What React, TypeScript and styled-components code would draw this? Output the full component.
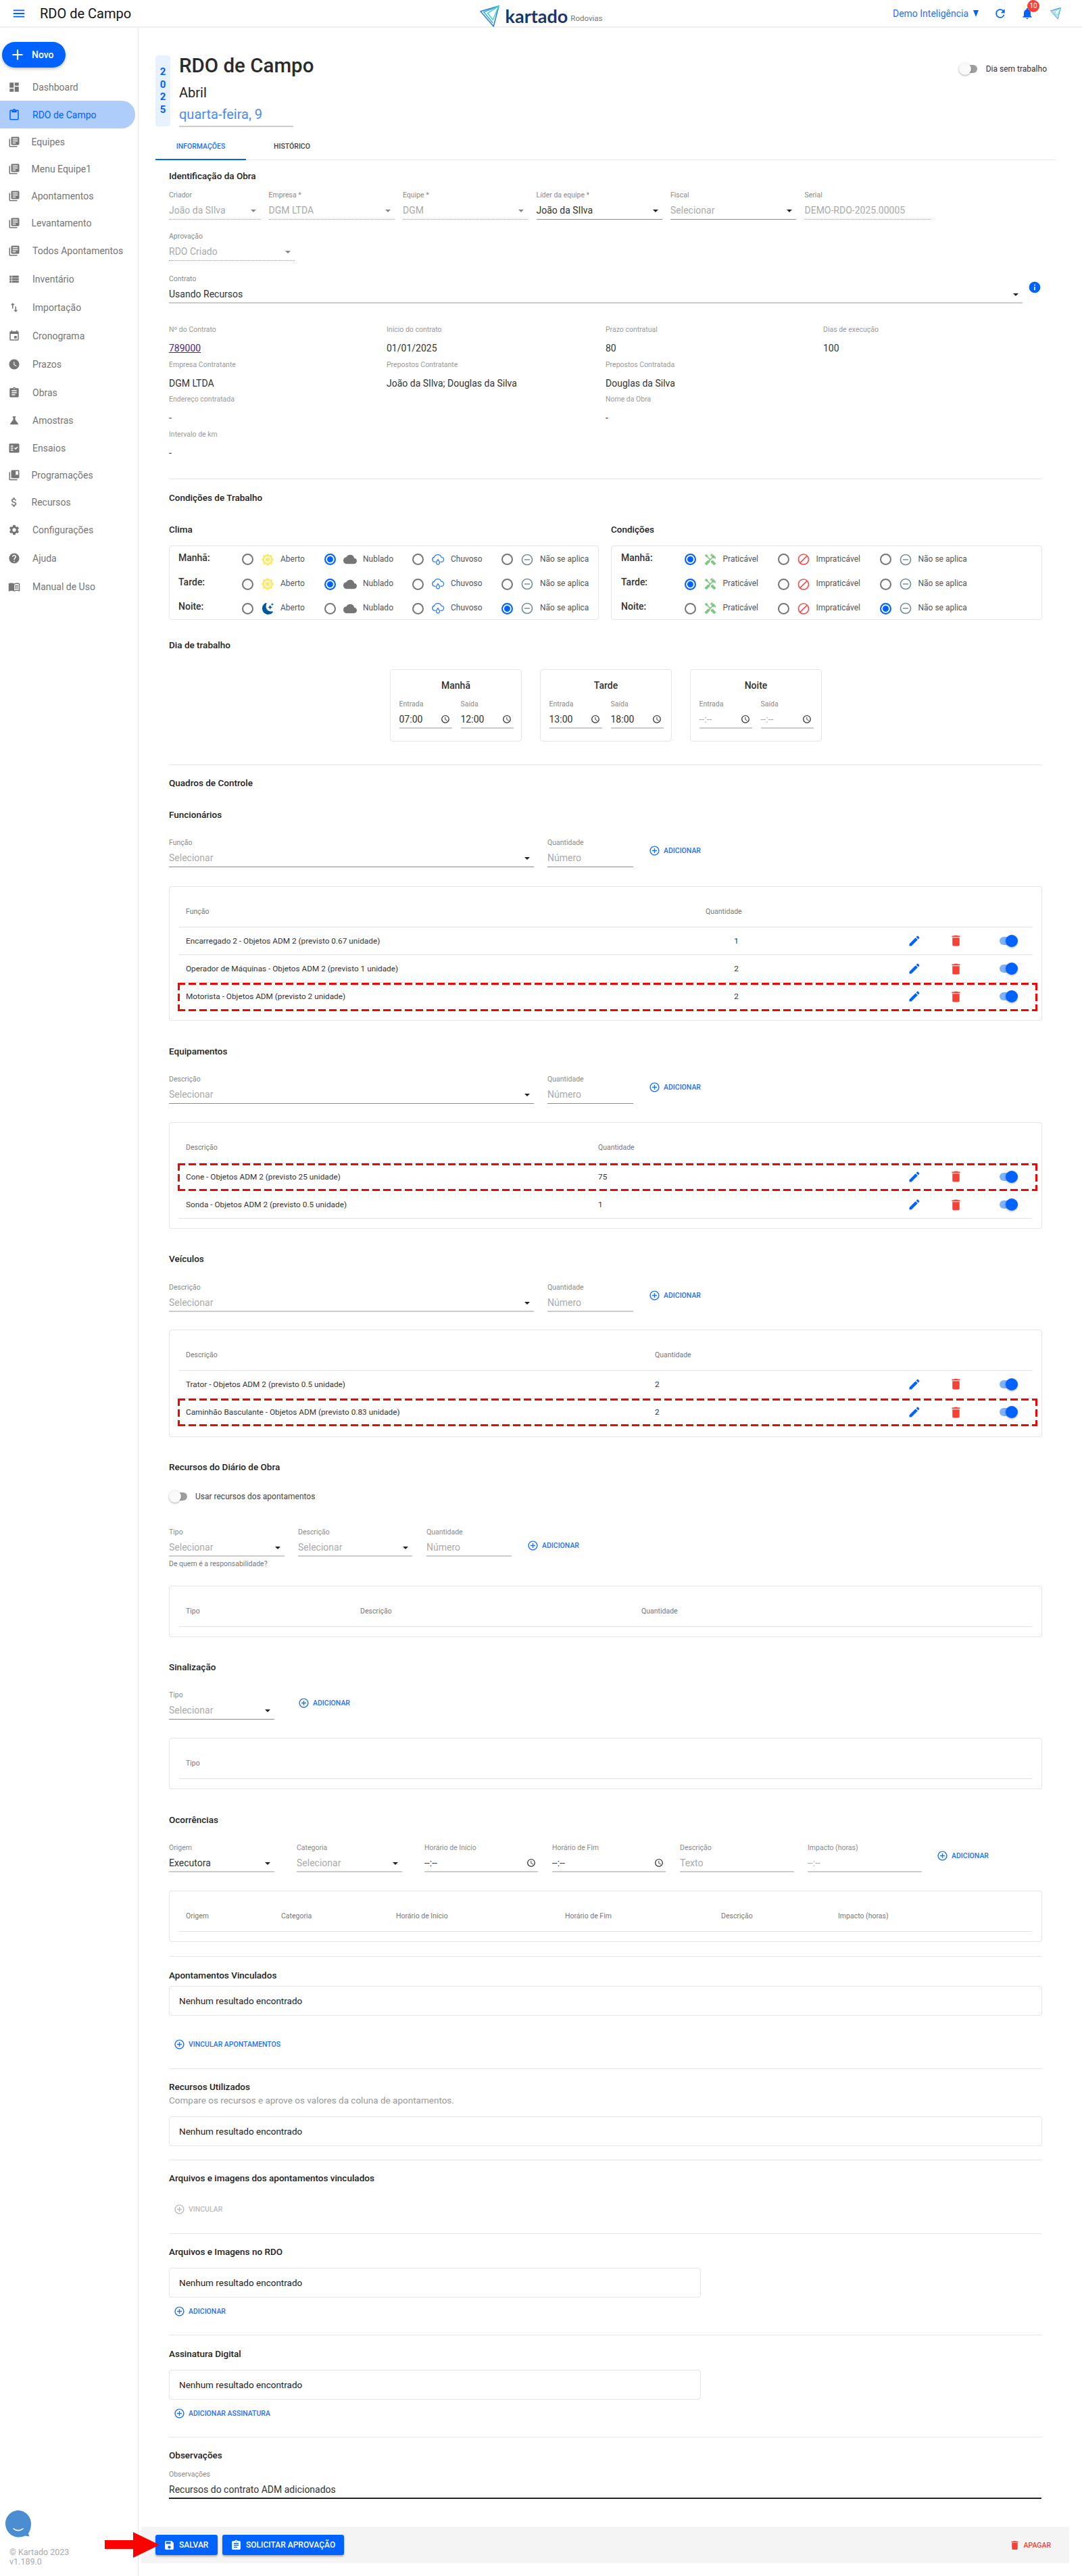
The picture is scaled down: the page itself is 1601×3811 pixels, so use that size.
import React from "react";
import styled, { createGlobalStyle } from "styled-components";
import {
  MdAccessTime, MdAdd, MdAddCircleOutline, MdAssignment, MdAttachMoney, MdBlock, MdBrightness7, MdCloud,
  MdCollectionsBookmark, MdContentPaste, MdDashboard, MdDelete, MdEdit, MdEvent, MdFactCheck, MdHandyman,
  MdHelp, MdImportExport, MdInfo, MdLibraryBooks, MdMenu, MdMenuBook, MdNotifications, MdRefresh,
  MdRemoveCircleOutline, MdSave, MdScience, MdSettings, MdViewList, MdWatchLater,
} from "react-icons/md";
import { BsMoonStarsFill } from "react-icons/bs";

const BLUE = "#0062ff";

const Global = createGlobalStyle`
  html, body { margin: 0; padding: 0; background: #fff; }
  body { font-family: Roboto, "Liberation Sans", sans-serif; color: #333; }
  * { box-sizing: border-box; }
  h1, h2, h3, p { margin: 0; }
`;

const Page = styled.div`
  width: 1601px;
  min-height: 3811px;
  display: flex;
  flex-direction: column;
`;

/* ---------- top bar ---------- */
const TopBar = styled.header`
  height: 41px;
  display: grid;
  grid-template-columns: 1fr auto 1fr;
  align-items: center;
  border-bottom: 2px solid #f0f0f0;
  flex: none;
`;
const TopLeft = styled.div`
  display: flex;
  align-items: center;
  padding-left: 17px;
  gap: 20px;
  color: ${BLUE};
`;
const PageName = styled.span`
  font-size: 20px;
  color: #151515;
`;
const Brand = styled.div`
  display: flex;
  align-items: flex-end;
  height: 40px;
`;
const BrandName = styled.span`
  font-family: Lato, Roboto, sans-serif;
  font-size: 27px;
  font-weight: 700;
  line-height: 33px;
  color: #17376e;
  margin-left: 9px;
`;
const BrandSub = styled.span`
  font-size: 11.5px;
  line-height: 12px;
  color: #777;
  margin-left: 4px;
  margin-bottom: 7px;
`;
const TopRight = styled.div`
  display: flex;
  align-items: center;
  justify-content: flex-end;
  padding-right: 31px;
  color: ${BLUE};
`;
const OrgPicker = styled.span`
  display: flex;
  align-items: center;
  gap: 7px;
  font-size: 14px;
  color: #1f72f2;
  margin-right: 22px;
  &::after {
    content: "";
    border-left: 4.5px solid transparent;
    border-right: 4.5px solid transparent;
    border-top: 10px solid ${BLUE};
  }
`;
const BellWrap = styled.span`
  position: relative;
  display: flex;
  margin: 0 24px 0 20px;
`;
const Badge = styled.span`
  position: absolute;
  left: 10px;
  top: -10px;
  width: 18px;
  height: 18px;
  border-radius: 50%;
  background: #f44336;
  color: #fff;
  font-size: 10px;
  line-height: 18px;
  text-align: center;
`;

const Plane = ({ size }: { size: number }) => (
  <svg width={size} height={size * 1.1} viewBox="0 0 30 33" fill="none" strokeWidth="1.6" strokeLinejoin="round">
    <path d="M29 1 L1 9 L21 32 Z" stroke="#2a7de1" />
    <path d="M29 1 L6 10 L20 27" stroke="#2fb2dc" />
    <path d="M29 1 L12 12 L20 22 Z" stroke="#3fd3cf" />
  </svg>
);

/* ---------- sidebar ---------- */
const Body = styled.div`
  display: flex;
  flex: 1;
`;
const Side = styled.aside`
  width: 205px;
  flex: none;
  border-right: 1px solid #e6e6e6;
  padding-top: 21px;
  display: flex;
  flex-direction: column;
`;
const NewButton = styled.button`
  width: 94px;
  height: 38px;
  margin-left: 3px;
  border: 0;
  padding: 0 0 0 10px;
  border-radius: 19px;
  background: ${BLUE};
  color: #fff;
  font: 500 14px Roboto, sans-serif;
  display: flex;
  align-items: center;
  gap: 8px;
  box-shadow: 0 2px 4px rgba(0, 0, 0, 0.25);
`;
const NavList = styled.nav`
  margin-top: 8px;
`;
const NavItem = styled.a<{ $h: number; $active?: boolean; $tight?: boolean }>`
  display: flex;
  align-items: center;
  height: ${(p) => p.$h}px;
  width: 200px;
  padding-left: 12px;
  font-size: 14px;
  color: ${(p) => (p.$active ? BLUE : "#757575")};
  background: ${(p) => (p.$active ? "#aecdfa" : "transparent")};
  border-radius: 0 20px 20px 0;
  span {
    margin-left: ${(p) => (p.$tight ? 16.5 : 18)}px;
  }
`;
const SideFoot = styled.div`
  margin-top: auto;
  padding: 0 0 14px 14px;
  font-size: 12.5px;
  line-height: 14px;
  color: #aaa;
`;
const Chat = styled.div`
  margin: 0 0 15px -6px;
  width: 38px;
  height: 40px;
`;

/* ---------- main ---------- */
const Main = styled.main`
  width: 1377px;
  display: flex;
  flex-direction: column;
`;
const Inner = styled.div`
  padding: 41px 0 0 25px;
  width: 1357px;
`;
const Head = styled.div`
  display: flex;
  height: 105px;
`;
const YearBox = styled.div`
  width: 22px;
  height: 105px;
  background: #e8f1fe;
  border-radius: 4px;
  color: ${BLUE};
  font-size: 15px;
  font-weight: 700;
  line-height: 18.5px;
  text-align: center;
  padding-top: 15px;
`;
const HeadText = styled.div`
  margin-left: 13px;
`;
const BigTitle = styled.h1`
  font-size: 29.5px;
  font-weight: 500;
  line-height: 30px;
  color: #2b2b2b;
`;
const Month = styled.div`
  font-size: 20px;
  line-height: 24px;
  margin-top: 13px;
  color: #222;
`;
const DayInput = styled.div`
  width: 169px;
  font-size: 20px;
  line-height: 24px;
  margin-top: 8px;
  padding-bottom: 5px;
  color: #4a8bf5;
  border-bottom: 2px solid #ccc;
`;
const DayOff = styled.label`
  margin: 12px 13px 0 auto;
  display: flex;
  align-items: center;
  height: 16px;
  gap: 12px;
  font-size: 12px;
  color: #333;
`;
const Toggle = styled.span<{ $on?: boolean }>`
  position: relative;
  display: inline-block;
  width: 28px;
  height: 18px;
  flex: none;
  &::before {
    content: "";
    position: absolute;
    left: 1px;
    right: 1px;
    top: 3px;
    height: 12px;
    border-radius: 6px;
    background: ${(p) => (p.$on ? "#7fb0fb" : "#9e9e9e")};
  }
  &::after {
    content: "";
    position: absolute;
    top: 0;
    width: 18px;
    height: 18px;
    border-radius: 50%;
    left: ${(p) => (p.$on ? "10px" : "0")};
    background: ${(p) => (p.$on ? BLUE : "#fafafa")};
    box-shadow: 0 1px 3px rgba(0, 0, 0, 0.35);
  }
`;
const Tabs = styled.div`
  margin-top: 10px;
  height: 40px;
  display: flex;
  border-bottom: 1px solid #e8e8e8;
`;
const Tab = styled.div<{ $active?: boolean }>`
  width: ${(p) => (p.$active ? 134 : 136)}px;
  height: 40px;
  display: flex;
  align-items: center;
  justify-content: center;
  font-size: 10.5px;
  font-weight: 500;
  color: ${(p) => (p.$active ? "#1f72f2" : "#444")};
  border-bottom: 2px solid ${(p) => (p.$active ? BLUE : "transparent")};
`;
const Form = styled.div`
  padding-left: 20px;
  width: 1312px;
`;
const Title = styled.h3<{ $mt: number }>`
  margin-top: ${(p) => p.$mt}px;
  font-size: 13.5px;
  font-weight: 500;
  line-height: 16px;
  color: #222;
`;
const Muted = styled.p`
  margin-top: 4px;
  font-size: 13.5px;
  line-height: 16px;
  color: #999;
`;
const Divider = styled.hr<{ $mt: number }>`
  margin: ${(p) => p.$mt}px 0 0;
  border: 0;
  height: 1px;
  background: #e6e6e6;
`;

/* fields */
const FieldRow = styled.div<{ $mt: number }>`
  display: flex;
  margin-top: ${(p) => p.$mt}px;
`;
const FieldBox = styled.div<{ $w: number; $ml?: number }>`
  width: ${(p) => p.$w}px;
  margin-left: ${(p) => p.$ml ?? 0}px;
  flex: none;
`;
const FieldLabel = styled.div`
  font-size: 10.5px;
  line-height: 12px;
  color: #8a8a8a;
`;
type Line = "dotted" | "thin" | "thick" | "dark";
const lineCss: Record<Line, string> = {
  dotted: "1px dotted #999",
  thin: "1px solid #8c8c8c",
  thick: "2px solid #ccc",
  dark: "2px solid #222",
};
const FieldValue = styled.div<{ $line: Line; $dim?: boolean }>`
  display: flex;
  height: 30px;
  padding-top: 6px;
  font-size: 14px;
  line-height: 20px;
  white-space: nowrap;
  color: ${(p) => (p.$dim ? "#aaa" : "#333")};
  border-bottom: ${(p) => lineCss[p.$line]};
`;
const Caret = styled.i<{ $dim?: boolean }>`
  margin: 9px 6px 0 auto;
  width: 0;
  height: 0;
  border-left: 4px solid transparent;
  border-right: 4px solid transparent;
  border-top: 4.5px solid ${(p) => (p.$dim ? "#888" : "#222")};
`;
const TrailIcon = styled.span`
  margin: 3px 3px 0 auto;
  display: flex;
  color: #222;
`;
const Field = ({
  w, ml, label, value, line = "thin", dim, caret, caretDim, clock,
}: {
  w: number; ml?: number; label: string; value: string; line?: Line; dim?: boolean;
  caret?: boolean; caretDim?: boolean; clock?: boolean;
}) => (
  <FieldBox $w={w} $ml={ml}>
    <FieldLabel>{label}</FieldLabel>
    <FieldValue $line={line} $dim={dim}>
      {value}
      {caret && <Caret $dim={caretDim} />}
      {clock && (
        <TrailIcon>
          <MdAccessTime size={14} />
        </TrailIcon>
      )}
    </FieldValue>
  </FieldBox>
);
const InfoDot = styled.span`
  margin: 8px 0 0 8px;
  color: ${BLUE};
  display: flex;
`;
const AddLink = styled.a<{ $mt?: number; $ml?: number; $off?: boolean }>`
  display: flex;
  align-items: center;
  gap: 5px;
  width: fit-content;
  height: 16px;
  flex: none;
  align-self: flex-start;
  margin-top: ${(p) => p.$mt ?? 10}px;
  margin-left: ${(p) => p.$ml ?? 0}px;
  font-size: 10.5px;
  font-weight: 500;
  white-space: nowrap;
  color: ${(p) => (p.$off ? "#bbb" : "#1f72f2")};
`;
const Add = ({ mt, ml, off, text = "ADICIONAR" }: { mt?: number; ml?: number; off?: boolean; text?: string }) => (
  <AddLink $mt={mt} $ml={ml} $off={off}>
    <MdAddCircleOutline size={17} />
    {text}
  </AddLink>
);

/* contract info */
const InfoGrid = styled.div`
  margin-top: 33px;
  display: grid;
  grid-template-columns: 322px 324px 322px 1fr;
  grid-auto-rows: 51.7px;
`;
const InfoLabel = styled.div`
  font-size: 10.5px;
  line-height: 12px;
  color: #999;
`;
const InfoValue = styled.div`
  margin-top: 11px;
  font-size: 14px;
  line-height: 20px;
  color: #333;
`;
const ContractLink = styled.a`
  color: #551a8b;
  text-decoration: underline;
`;
const Info = ({ label, children }: { label?: string; children?: React.ReactNode }) => (
  <div>
    {label && <InfoLabel>{label}</InfoLabel>}
    {label && <InfoValue>{children}</InfoValue>}
  </div>
);

/* working conditions */
const TwoCols = styled.div`
  display: grid;
  grid-template-columns: 636px 638px;
  column-gap: 18px;
  margin-top: 31px;
`;
const Box = styled.div<{ $mt?: number }>`
  border: 1px solid #e4e4e4;
  border-radius: 4px;
  margin-top: ${(p) => p.$mt ?? 0}px;
`;
const Weather = styled(Box)<{ $pad: number }>`
  height: 110px;
  margin-top: 16px;
  padding: 2px 0 0 ${(p) => p.$pad}px;
`;
const WeatherRow = styled.div<{ $cols: string }>`
  display: grid;
  grid-template-columns: ${(p) => p.$cols};
  height: 36.3px;
  align-items: center;
`;
const RowLabel = styled.span`
  font-size: 14px;
  font-weight: 500;
  color: #333;
  margin-top: -6px;
`;
const Option = styled.div`
  display: flex;
  align-items: center;
`;
const Radio = styled.span<{ $on?: boolean }>`
  width: 17px;
  height: 17px;
  border-radius: 50%;
  flex: none;
  border: 2px solid ${(p) => (p.$on ? BLUE : "#757575")};
  box-shadow: ${(p) => (p.$on ? `inset 0 0 0 2px #fff, inset 0 0 0 7px ${BLUE}` : "none")};
`;
const OptionIcon = styled.span<{ $c: string }>`
  width: 20px;
  height: 20px;
  margin-left: 11px;
  display: flex;
  align-items: center;
  justify-content: center;
  color: ${(p) => p.$c};
  flex: none;
`;
const OptionText = styled.span`
  margin-left: 9px;
  margin-top: -2px;
  font-size: 12px;
  color: #555;
  white-space: nowrap;
`;

const RainCloud = () => (
  <svg width="22" height="24" viewBox="0 0 24 26" fill="none" stroke="#2f7cf0" strokeWidth="1.6" strokeLinejoin="round">
    <path d="M8 17H6.2a4.3 4.3 0 0 1-.6-8.500A6.600 6.600 0 0 1 18 8.600a4.200 4.200 0 0 1 .2 8.400H16" />
    <path d="M12 12.500l2.600 4.400a3 3 0 1 1-5.200 0z" />
  </svg>
);

const sun = { c: "#fde868", i: <MdBrightness7 size={24} /> };
const moon = { c: "#01579b", i: <BsMoonStarsFill size={17} /> };
const cloud = { c: "#757575", i: <MdCloud size={21} /> };
const rain = { c: "#2f7cf0", i: <RainCloud /> };
const na = { c: "#78909c", i: <MdRemoveCircleOutline size={20} /> };
const tools = { c: "#81c784", i: <MdHandyman size={22} /> };
const block = { c: "#ef5350", i: <MdBlock size={21} /> };

const Opt = ({ on, icon, text }: { on?: boolean; icon: { c: string; i: React.ReactNode }; text: string }) => (
  <Option>
    <Radio $on={on} />
    <OptionIcon $c={icon.c}>{icon.i}</OptionIcon>
    <OptionText>{text}</OptionText>
  </Option>
);

/* shifts */
const Shifts = styled.div`
  display: flex;
  justify-content: center;
  gap: 27px;
  margin-top: 28px;
`;
const ShiftCard = styled(Box)`
  width: 195px;
  height: 107px;
  padding: 14px 12px 0 13px;
`;
const ShiftName = styled.div`
  text-align: center;
  font-size: 14px;
  font-weight: 500;
  line-height: 18px;
  color: #333;
`;
const ShiftFields = styled.div`
  display: flex;
  gap: 13px;
  margin-top: 13px;
`;
const Shift = ({ name, a, b }: { name: string; a: string; b: string }) => (
  <ShiftCard>
    <ShiftName>{name}</ShiftName>
    <ShiftFields>
      <Field w={78} label="Entrada" value={a} line="thick" clock dim={a.startsWith("-")} />
      <Field w={78} label="Saída" value={b} line="thick" clock dim={b.startsWith("-")} />
    </ShiftFields>
  </ShiftCard>
);

/* tables */
const TableBox = styled(Box)<{ $h: number }>`
  height: ${(p) => p.$h}px;
  padding: 0 14px;
`;
const TableHead = styled.div<{ $cols: string }>`
  display: grid;
  grid-template-columns: ${(p) => p.$cols};
  height: 60px;
  padding-top: 31px;
  font-size: 10.5px;
  line-height: 12px;
  color: #777;
  border-bottom: 1px solid #e0e0e0;
  & > :first-child {
    padding-left: 10px;
  }
`;
const Row = styled.div<{ $cols: string; $hl?: boolean }>`
  position: relative;
  display: grid;
  grid-template-columns: ${(p) => p.$cols};
  align-items: center;
  height: 41.3px;
  font-size: 11.8px;
  color: #333;
  border-bottom: 1px solid #e0e0e0;
  & > :first-child {
    padding-left: 10px;
  }
  ${(p) =>
    p.$hl &&
    `&::after {
      content: "";
      position: absolute;
      left: -2px;
      right: -8px;
      top: 0;
      bottom: -1px;
      pointer-events: none;
      background:
        linear-gradient(90deg, #f00 11px, transparent 0) repeat-x 0 0 / 16px 3px,
        linear-gradient(90deg, #f00 11px, transparent 0) repeat-x 0 100% / 16px 3px,
        linear-gradient(180deg, #f00 11px, transparent 0) repeat-y 0 0 / 3px 16px,
        linear-gradient(180deg, #f00 11px, transparent 0) repeat-y 100% 0 / 3px 16px;
    }`}
`;
const Qty = styled.span<{ $right?: boolean }>`
  text-align: ${(p) => (p.$right ? "right" : "left")};
  padding-right: ${(p) => (p.$right ? 3 : 0)}px;
`;
const HeadQty = styled.span<{ $right?: boolean }>`
  text-align: ${(p) => (p.$right ? "right" : "left")};
`;
const Actions = styled.div`
  display: flex;
  align-items: center;
  justify-content: flex-end;
  gap: 41px;
  padding-right: 21px;
`;
const EditBtn = styled.span`
  color: ${BLUE};
  display: flex;
`;
const TrashBtn = styled.span`
  color: #f44336;
  display: flex;
  margin-right: 12px;
`;
const RowActions = () => (
  <Actions>
    <EditBtn>
      <MdEdit size={20} />
    </EditBtn>
    <TrashBtn>
      <MdDelete size={21} />
    </TrashBtn>
    <Toggle $on />
  </Actions>
);

type Res = [string, string, boolean?];
const ResourceTable = ({
  first, col, rows, right, h, mt,
}: { first: string; col: number; rows: Res[]; right?: boolean; h: number; mt: number }) => {
  const cols = right ? `${col}px 52px 1fr` : `${col}px 53px 1fr`;
  return (
    <TableBox $mt={mt} $h={h}>
      <TableHead $cols={cols}>
        <span>{first}</span>
        <HeadQty $right={right}>Quantidade</HeadQty>
      </TableHead>
      {rows.map(([n, q, hl]) => (
        <Row key={n} $cols={cols} $hl={hl}>
          <span>{n}</span>
          <Qty $right={right}>{q}</Qty>
          <RowActions />
        </Row>
      ))}
    </TableBox>
  );
};
const EmptyTable = ({ cols, heads, mt = 26 }: { cols: string; heads: string[]; mt?: number }) => (
  <TableBox $mt={mt} $h={76}>
    <TableHead $cols={cols}>
      {heads.map((h) => (
        <span key={h}>{h}</span>
      ))}
    </TableHead>
  </TableBox>
);

const ResultBox = styled(Box)<{ $w?: number }>`
  width: ${(p) => (p.$w ? `${p.$w}px` : "100%")};
  height: 44px;
  padding-left: 14px;
  display: flex;
  align-items: center;
  font-size: 13.5px;
  color: #222;
`;
const Helper = styled.div`
  margin-top: 5px;
  font-size: 10.5px;
  line-height: 12px;
  color: #777;
`;
const UseRow = styled.label`
  margin-top: 26px;
  height: 20px;
  display: flex;
  align-items: center;
  gap: 11px;
  font-size: 12px;
  color: #444;
`;

/* bottom bar */
const Footer = styled.footer`
  position: relative;
  margin: 41px 0 0 4px;
  width: 1373px;
  height: 54px;
  background: #f4f4f4;
  display: flex;
  align-items: center;
  gap: 7px;
  padding: 0 27px 0 21px;
`;
const Primary = styled.button<{ $w: number }>`
  width: ${(p) => p.$w}px;
  height: 30px;
  border: 0;
  border-radius: 3px;
  background: ${BLUE};
  color: #fff;
  font: 500 12px Roboto, sans-serif;
  display: flex;
  align-items: center;
  gap: 6px;
  padding: 0 0 0 12px;
  box-shadow: 0 2px 3px rgba(0, 0, 0, 0.3);
`;
const Danger = styled.span`
  margin-left: auto;
  display: flex;
  align-items: center;
  gap: 5px;
  color: #f44336;
  font-size: 10.5px;
  font-weight: 500;
`;
const ArrowMark = styled.svg`
  position: absolute;
  left: -54px;
  top: 8px;
`;

const nav: { t: string; i: React.ElementType; h: number; tight?: boolean; active?: boolean }[] = [
  { t: "Dashboard", i: MdDashboard, h: 41 },
  { t: "RDO de Campo", i: MdContentPaste, h: 41, active: true },
  { t: "Equipes", i: MdLibraryBooks, h: 40, tight: true },
  { t: "Menu Equipe1", i: MdLibraryBooks, h: 40, tight: true },
  { t: "Apontamentos", i: MdLibraryBooks, h: 40, tight: true },
  { t: "Levantamento", i: MdLibraryBooks, h: 40, tight: true },
  { t: "Todos Apontamentos", i: MdLibraryBooks, h: 42 },
  { t: "Inventário", i: MdViewList, h: 42 },
  { t: "Importação", i: MdImportExport, h: 42 },
  { t: "Cronograma", i: MdEvent, h: 42 },
  { t: "Prazos", i: MdWatchLater, h: 42 },
  { t: "Obras", i: MdAssignment, h: 41 },
  { t: "Amostras", i: MdScience, h: 41 },
  { t: "Ensaios", i: MdFactCheck, h: 41 },
  { t: "Programações", i: MdCollectionsBookmark, h: 40, tight: true },
  { t: "Recursos", i: MdAttachMoney, h: 40, tight: true },
  { t: "Configurações", i: MdSettings, h: 42 },
  { t: "Ajuda", i: MdHelp, h: 42 },
  { t: "Manual de Uso", i: MdMenuBook, h: 42 },
];

const CLIMA_COLS = "94px 122px 130px 132px auto";
const COND_COLS = "93.5px 138px 151px auto";

export default function App() {
  return (
    <Page>
      <Global />
      <TopBar>
        <TopLeft>
          <MdMenu size={22} />
          <PageName>RDO de Campo</PageName>
        </TopLeft>
        <Brand>
          <Plane size={29} />
          <BrandName>kartado</BrandName>
          <BrandSub>Rodovias</BrandSub>
        </Brand>
        <TopRight>
          <OrgPicker>Demo Inteligência</OrgPicker>
          <MdRefresh size={20} />
          <BellWrap>
            <MdNotifications size={20} />
            <Badge>10</Badge>
          </BellWrap>
          <Plane size={16} />
        </TopRight>
      </TopBar>
      <Body>
        <Side>
          <NewButton>
            <MdAdd size={26} />
            Novo
          </NewButton>
          <NavList>
            {nav.map(({ t, i: Icon, h, tight, active }) => (
              <NavItem key={t} $h={h} $tight={tight} $active={active}>
                <Icon size={18} />
                <span>{t}</span>
              </NavItem>
            ))}
          </NavList>
          <SideFoot>
            <Chat>
              <svg width="38" height="40" viewBox="0 0 38 40">
                <path d="M19 0c10.500 0 19 9 19 19.500 0 6-1.500 11-4 14.500l1.500 4.500-6.500-1c-3 1.500-6.500 2-10 2C8.500 39.500 0 30 0 19.500S8.500 0 19 0z" fill="#4a8ed1" />
                <path d="M12 27c4 3.500 10 3.500 14 0" fill="none" stroke="#fff" strokeWidth="1.600" strokeLinecap="round" />
              </svg>
            </Chat>
            © Kartado 2023
            <br />
            v1.189.0
          </SideFoot>
        </Side>
        <Main>
          <Inner>
            <Head>
              <YearBox>
                2<br />0<br />2<br />5
              </YearBox>
              <HeadText>
                <BigTitle>RDO de Campo</BigTitle>
                <Month>Abril</Month>
                <DayInput>quarta-feira, 9</DayInput>
              </HeadText>
              <DayOff>
                <Toggle />
                Dia sem trabalho
              </DayOff>
            </Head>
            <Tabs>
              <Tab $active>INFORMAÇÕES</Tab>
              <Tab>HISTÓRICO</Tab>
            </Tabs>
            <Form>
              <Title $mt={15}>Identificação da Obra</Title>
              <FieldRow $mt={15}>
                <Field w={135} label="Criador" value="João da SIlva" line="dotted" dim caret caretDim />
                <Field w={186} ml={12.5} label="Empresa *" value="DGM LTDA" line="dotted" dim caret caretDim />
                <Field w={185} ml={12.5} label="Equipe *" value="DGM" line="dotted" dim caret caretDim />
                <Field w={186} ml={12.5} label="Líder da equipe *" value="João da SIlva" caret />
                <Field w={186} ml={12.5} label="Fiscal" value="Selecionar" dim caret />
                <Field w={187} ml={12.5} label="Serial" value="DEMO-RDO-2025.00005" line="dotted" dim />
              </FieldRow>
              <FieldRow $mt={19}>
                <Field w={186} label="Aprovação" value="RDO Criado" line="dotted" dim caret caretDim />
              </FieldRow>
              <FieldRow $mt={21}>
                <Field w={1263} label="Contrato" value="Usando Recursos" line="thick" caret />
                <InfoDot>
                  <MdInfo size={20} />
                </InfoDot>
              </FieldRow>
              <InfoGrid>
                <Info label="Nº do Contrato"><ContractLink>789000</ContractLink></Info>
                <Info label="Início do contrato">01/01/2025</Info>
                <Info label="Prazo contratual">80</Info>
                <Info label="Dias de execução">100</Info>
                <Info label="Empresa Contratante">DGM LTDA</Info>
                <Info label="Prepostos Contratante">João da SIlva; Douglas da Silva</Info>
                <Info label="Prepostos Contratada">Douglas da Silva</Info>
                <Info />
                <Info label="Endereço contratada">-</Info>
                <Info />
                <Info label="Nome da Obra">-</Info>
                <Info />
                <Info label="Intervalo de km">-</Info>
              </InfoGrid>
              <Divider $mt={19} />
              <Title $mt={19}>Condições de Trabalho</Title>
              <TwoCols>
                <div>
                  <Title $mt={0}>Clima</Title>
                  <Weather $pad={13}>
                    <WeatherRow $cols={CLIMA_COLS}>
                      <RowLabel>Manhã:</RowLabel>
                      <Opt icon={sun} text="Aberto" />
                      <Opt on icon={cloud} text="Nublado" />
                      <Opt icon={rain} text="Chuvoso" />
                      <Opt icon={na} text="Não se aplica" />
                    </WeatherRow>
                    <WeatherRow $cols={CLIMA_COLS}>
                      <RowLabel>Tarde:</RowLabel>
                      <Opt icon={sun} text="Aberto" />
                      <Opt on icon={cloud} text="Nublado" />
                      <Opt icon={rain} text="Chuvoso" />
                      <Opt icon={na} text="Não se aplica" />
                    </WeatherRow>
                    <WeatherRow $cols={CLIMA_COLS}>
                      <RowLabel>Noite:</RowLabel>
                      <Opt icon={moon} text="Aberto" />
                      <Opt icon={cloud} text="Nublado" />
                      <Opt icon={rain} text="Chuvoso" />
                      <Opt on icon={na} text="Não se aplica" />
                    </WeatherRow>
                  </Weather>
                </div>
                <div>
                  <Title $mt={0}>Condições</Title>
                  <Weather $pad={14}>
                    <WeatherRow $cols={COND_COLS}>
                      <RowLabel>Manhã:</RowLabel>
                      <Opt on icon={tools} text="Praticável" />
                      <Opt icon={block} text="Impraticável" />
                      <Opt icon={na} text="Não se aplica" />
                    </WeatherRow>
                    <WeatherRow $cols={COND_COLS}>
                      <RowLabel>Tarde:</RowLabel>
                      <Opt on icon={tools} text="Praticável" />
                      <Opt icon={block} text="Impraticável" />
                      <Opt icon={na} text="Não se aplica" />
                    </WeatherRow>
                    <WeatherRow $cols={COND_COLS}>
                      <RowLabel>Noite:</RowLabel>
                      <Opt icon={tools} text="Praticável" />
                      <Opt icon={block} text="Impraticável" />
                      <Opt on icon={na} text="Não se aplica" />
                    </WeatherRow>
                  </Weather>
                </div>
              </TwoCols>
              <Title $mt={29}>Dia de trabalho</Title>
              <Shifts>
                <Shift name="Manhã" a="07:00" b="12:00" />
                <Shift name="Tarde" a="13:00" b="18:00" />
                <Shift name="Noite" a="--:--" b="--:--" />
              </Shifts>
              <Divider $mt={34} />
              <Title $mt={18}>Quadros de Controle</Title>
              <Title $mt={31}>Funcionários</Title>
              <FieldRow $mt={28}>
                <Field w={540} label="Função" value="Selecionar" dim caret />
                <Field w={127} ml={20} label="Quantidade" value="Número" dim />
                <Add ml={23} />
              </FieldRow>
              <ResourceTable
                first="Função" col={779} right h={199} mt={28}
                rows={[
                  ["Encarregado 2 - Objetos ADM 2 (previsto 0.67 unidade)", "1"],
                  ["Operador de Máquinas - Objetos ADM 2 (previsto 1 unidade)", "2"],
                  ["Motorista - Objetos ADM (previsto 2 unidade)", "2", true],
                ]}
              />
              <Title $mt={37}>Equipamentos</Title>
              <FieldRow $mt={28}>
                <Field w={540} label="Descrição" value="Selecionar" dim caret />
                <Field w={127} ml={20} label="Quantidade" value="Número" dim />
                <Add ml={23} />
              </FieldRow>
              <ResourceTable
                first="Descrição" col={620} h={158} mt={27}
                rows={[
                  ["Cone - Objetos ADM 2 (previsto 25 unidade)", "75", true],
                  ["Sonda - Objetos ADM 2 (previsto 0.5 unidade)", "1"],
                ]}
              />
              <Title $mt={36}>Veículos</Title>
              <FieldRow $mt={29}>
                <Field w={540} label="Descrição" value="Selecionar" dim caret line="thick" />
                <Field w={127} ml={20} label="Quantidade" value="Número" dim line="thick" />
                <Add ml={23} />
              </FieldRow>
              <ResourceTable
                first="Descrição" col={704} h={159} mt={26}
                rows={[
                  ["Trator - Objetos ADM 2 (previsto 0.5 unidade)", "2"],
                  ["Caminhão Basculante - Objetos ADM (previsto 0.83 unidade)", "2", true],
                ]}
              />
              <Title $mt={36}>Recursos do Diário de Obra</Title>
              <UseRow>
                <Toggle />
                Usar recursos dos apontamentos
              </UseRow>
              <FieldRow $mt={37}>
                <Field w={171} label="Tipo" value="Selecionar" dim caret line="thick" />
                <Field w={169} ml={20} label="Descrição" value="Selecionar" dim caret line="thick" />
                <Field w={126} ml={21} label="Quantidade" value="Número" dim line="thick" />
                <Add ml={23} mt={18} />
              </FieldRow>
              <Helper>De quem é a responsabilidade?</Helper>
              <EmptyTable cols="268px 416px 1fr" heads={["Tipo", "Descrição", "Quantidade"]} />
              <Title $mt={36}>Sinalização</Title>
              <FieldRow $mt={28}>
                <Field w={156} label="Tipo" value="Selecionar" dim caret />
                <Add ml={35} />
              </FieldRow>
              <EmptyTable mt={27} cols="1fr" heads={["Tipo"]} />
              <Title $mt={37}>Ocorrências</Title>
              <FieldRow $mt={28}>
                <Field w={156} label="Origem" value="Executora" caret line="thick" />
                <Field w={156} ml={33} label="Categoria" value="Selecionar" dim caret line="thick" />
                <Field w={168} ml={33} label="Horário de Início" value="--:--" clock line="thick" />
                <Field w={168} ml={21} label="Horário de Fim" value="--:--" clock line="thick" />
                <Field w={169} ml={21} label="Descrição" value="Texto" dim line="thick" />
                <Field w={169} ml={20} label="Impacto (horas)" value="--:--" dim line="thick" />
                <Add ml={22} />
              </FieldRow>
              <EmptyTable
                mt={27}
                cols="151px 170px 250px 231px 173px 1fr"
                heads={["Origem", "Categoria", "Horário de Início", "Horário de Fim", "Descrição", "Impacto (horas)"]}
              />
              <Divider $mt={21} />
              <Title $mt={19}>Apontamentos Vinculados</Title>
              <ResultBox $mt={8}>Nenhum resultado encontrado</ResultBox>
              <Add mt={35} ml={7} text="VINCULAR APONTAMENTOS" />
              <Divider $mt={27} />
              <Title $mt={18}>Recursos Utilizados</Title>
              <Muted>Compare os recursos e aprove os valores da coluna de apontamentos.</Muted>
              <ResultBox $mt={16}>Nenhum resultado encontrado</ResultBox>
              <Divider $mt={20} />
              <Title $mt={18}>Arquivos e imagens dos apontamentos vinculados</Title>
              <Add mt={31} ml={7} off text="VINCULAR" />
              <Divider $mt={27} />
              <Title $mt={18.5}>Arquivos e Imagens no RDO</Title>
              <ResultBox $mt={16} $w={787}>Nenhum resultado encontrado</ResultBox>
              <Add mt={12.5} ml={7} />
              <Divider $mt={26.5} />
              <Title $mt={18.5}>Assinatura Digital</Title>
              <ResultBox $mt={16.5} $w={787}>Nenhum resultado encontrado</ResultBox>
              <Add mt={12.5} ml={7} text="ADICIONAR ASSINATURA" />
              <Divider $mt={26.5} />
              <Title $mt={18}>Observações</Title>
              <FieldRow $mt={15}>
                <Field w={1291} label="Observações" value="Recursos do contrato ADM adicionados" line="dark" />
              </FieldRow>
            </Form>
          </Inner>
          <Footer>
            <ArrowMark width="81" height="38" viewBox="0 0 81 38">
              <polygon points="0,12 42,12 42,0 81,19 42,38 42,25 0,25" fill="#f00" />
            </ArrowMark>
            <Primary $w={92}>
              <MdSave size={17} />
              SALVAR
            </Primary>
            <Primary $w={180}>
              <MdAssignment size={17} />
              SOLICITAR APROVAÇÃO
            </Primary>
            <Danger>
              <MdDelete size={17} />
              APAGAR
            </Danger>
          </Footer>
        </Main>
      </Body>
    </Page>
  );
}
